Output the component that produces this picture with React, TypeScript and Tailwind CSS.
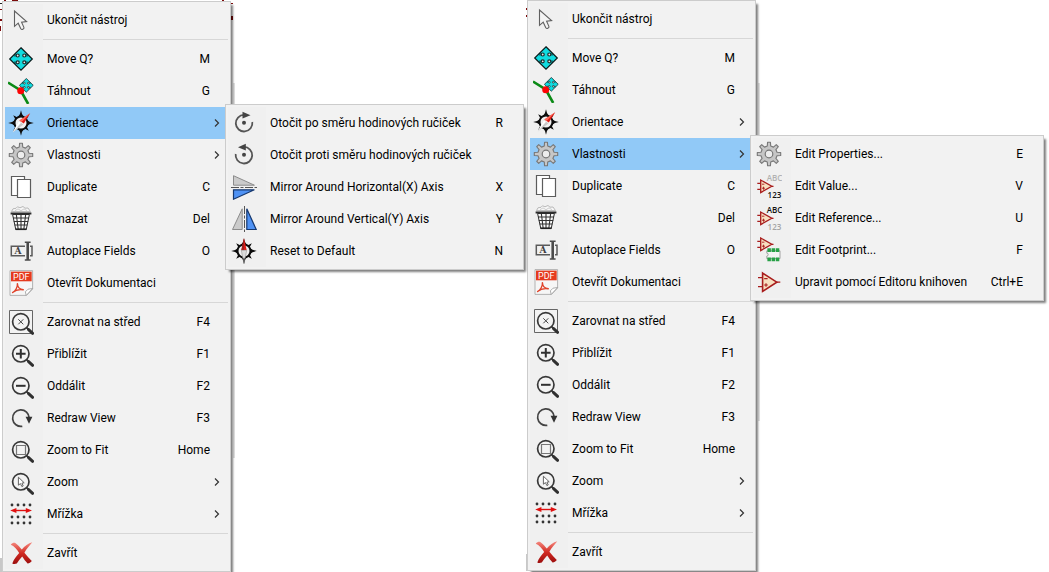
import type { ReactNode } from "react";

type IconName =
  | "cursor" | "move" | "drag" | "compass" | "compassNorth" | "gear" | "duplicate" | "trash"
  | "autoplace" | "pdf" | "center" | "zoomIn" | "zoomOut" | "redraw" | "fit" | "zoom" | "grid"
  | "close" | "cw" | "ccw" | "mirrorX" | "mirrorY" | "value" | "reference" | "footprint" | "library";

interface Entry {
  icon: IconName;
  label: string;
  keys?: string;
  submenu?: boolean;
}

const groups: Entry[][] = [
  [{ icon: "cursor", label: "Ukončit nástroj" }],
  [
    { icon: "move", label: "Move Q?", keys: "M" },
    { icon: "drag", label: "Táhnout", keys: "G" },
    { icon: "compass", label: "Orientace", submenu: true },
    { icon: "gear", label: "Vlastnosti", submenu: true },
    { icon: "duplicate", label: "Duplicate", keys: "C" },
    { icon: "trash", label: "Smazat", keys: "Del" },
    { icon: "autoplace", label: "Autoplace Fields", keys: "O" },
    { icon: "pdf", label: "Otevřít Dokumentaci" },
  ],
  [
    { icon: "center", label: "Zarovnat na střed", keys: "F4" },
    { icon: "zoomIn", label: "Přiblížit", keys: "F1" },
    { icon: "zoomOut", label: "Oddálit", keys: "F2" },
    { icon: "redraw", label: "Redraw View", keys: "F3" },
    { icon: "fit", label: "Zoom to Fit", keys: "Home" },
    { icon: "zoom", label: "Zoom", submenu: true },
    { icon: "grid", label: "Mřížka", submenu: true },
  ],
  [{ icon: "close", label: "Zavřít" }],
];

const orientation: Entry[] = [
  { icon: "cw", label: "Otočit po směru hodinových ručiček", keys: "R" },
  { icon: "ccw", label: "Otočit proti směru hodinových ručiček" },
  { icon: "mirrorX", label: "Mirror Around Horizontal(X) Axis", keys: "X" },
  { icon: "mirrorY", label: "Mirror Around Vertical(Y) Axis", keys: "Y" },
  { icon: "compassNorth", label: "Reset to Default", keys: "N" },
];

const properties: Entry[] = [
  { icon: "gear", label: "Edit Properties...", keys: "E" },
  { icon: "value", label: "Edit Value...", keys: "V" },
  { icon: "reference", label: "Edit Reference...", keys: "U" },
  { icon: "footprint", label: "Edit Footprint...", keys: "F" },
  { icon: "library", label: "Upravit pomocí Editoru knihoven", keys: "Ctrl+E" },
];

const gearPath = (() => {
  const points: string[] = [];
  for (let tooth = 0; tooth < 8; tooth++) {
    const base = tooth * 45 - 90;
    for (const [offset, radius] of [[-12, 8.2], [-7, 11.8], [7, 11.8], [12, 8.2]]) {
      const angle = ((base + offset) * Math.PI) / 180;
      points.push(`${(13 + radius * Math.cos(angle)).toFixed(2)} ${(13 + radius * Math.sin(angle)).toFixed(2)}`);
    }
  }
  return `M${points.join("L")}Z`;
})();

function MoveShape() {
  return (
    <g>
      <path d="M13 1.8 24.3 13 13 24.2 1.7 13Z" fill="#10dce0" stroke="#0b1a1a" strokeWidth="1.2" />
      {[[9.7, 9.5], [16.3, 9.5], [9.7, 16.3], [16.3, 16.3]].map(([x, y]) => (
        <circle key={`${x}-${y}`} cx={x} cy={y} r="1.5" fill="#e4ecec" stroke="#1c2c2c" strokeWidth="1.2" />
      ))}
      <path d="M7 8.1V10.6M19 8.1V10.6M7 15.4V17.9M19 15.4V17.9" stroke="#0b1a1a" strokeWidth="1" />
    </g>
  );
}

function Rose() {
  return (
    <g>
      <path d="M13 .2Q13.6 4.6 16 7H10Q12.4 4.6 13 .2ZM13 25.8Q13.6 21.4 16 19H10Q12.4 21.4 13 25.8ZM.2 13Q4.6 12.4 7 10V16Q4.6 13.6 .2 13ZM25.8 13Q21.4 12.4 19 10V16Q21.4 13.6 25.8 13Z" fill="#0c0c0c" />
      <path d="M5.2 5.2 9.6 7.4 7.4 9.6ZM20.8 5.2 18.6 9.6 16.4 7.4ZM5.2 20.8 7.4 16.4 9.6 18.6ZM20.8 20.8 16.4 18.6 18.6 16.4Z" fill="#0c0c0c" />
      <circle cx="13" cy="13" r="6.5" fill="#f0f0f0" stroke="#0c0c0c" strokeWidth="2" />
    </g>
  );
}

function Amp({ x = 0, y = 0 }: { x?: number; y?: number }) {
  return (
    <g transform={`translate(${x} ${y})`}>
      <path d="M1.3 10.3H4.7M1.3 16.3H4.7M16 13.3H17.5" stroke="#a81c1c" strokeWidth="1.3" />
      <path d="M4.7 7V19.6L15.8 13.3Z" fill="#f7dfc0" stroke="#a81c1c" strokeWidth="1.3" />
      <path d="M6 11.2H8.4M6 15.2H9M7.5 13.7V16.7" stroke="#a81c1c" strokeWidth=".9" />
    </g>
  );
}

function Lens({ children }: { children?: ReactNode }) {
  return (
    <g>
      <circle cx="12.8" cy="12.8" r="8.2" fill="#f3f3f3" stroke="#383838" strokeWidth="1.7" />
      <path d="M18.6 18.6 20.6 20.6" stroke="#383838" strokeWidth="1.8" />
      <path d="M20.6 20.6 24.6 24.3" stroke="#303030" strokeWidth="3" strokeLinecap="round" />
      {children}
    </g>
  );
}

const labelFont = "font-['Open_Sans',sans-serif] text-[8px] font-semibold";

const icons: Record<IconName, ReactNode> = {
  cursor: <path d="M6.5 4V19.3L10.2 16.2 12.8 21.8Q13.6 22.9 14.8 22.3 16.3 21.6 15.9 20.4L13.6 15.2 18.6 14.6Z" fill="#f4f4f4" stroke="#606060" strokeWidth="1.1" />,
  move: <MoveShape />,
  drag: (
    <g>
      <path d="M0 4.5 12.7 12.5 20.2 26" fill="none" stroke="#0b8a16" strokeWidth="2.6" />
      <g transform="translate(10.4 -.6) scale(.61)"><MoveShape /></g>
      <circle cx="12.7" cy="12.7" r="3.5" fill="#fb0505" />
    </g>
  ),
  compass: (
    <g>
      <Rose />
      <path d="M22.2 3.2 15.8 13.6 11.4 10.4Z" fill="#dc1b14" />
      <path d="M22.2 3.2 13.6 12 11.4 10.4Z" fill="#ff6a5a" />
      <path d="M4.8 22.6 10.8 11 15.4 14.6Z" fill="#c9c9c9" />
      <path d="M4.8 22.6 10.8 11 13 12.8Z" fill="#fff" />
    </g>
  ),
  compassNorth: (
    <g>
      <Rose />
      <path d="M13 .2 15.7 12.3H10.3Z" fill="#e01a14" />
      <path d="M13 .2V12.3H10.3Z" fill="#9e1f1f" />
      <path d="M10.3 12.3H15.7L13 25.8Z" fill="#dcdcdc" stroke="#888" strokeWidth=".5" />
      <path d="M13 19.5 13.8 21 13 25.8 12.2 21Z" fill="#333" />
    </g>
  ),
  gear: (
    <g>
      <path d={gearPath} fill="#c6c6c6" stroke="#777" strokeWidth="1.1" strokeLinejoin="round" />
      <circle cx="13" cy="13" r="3.8" fill="#ededed" stroke="#777" strokeWidth="1.2" />
    </g>
  ),
  duplicate: (
    <g fill="#fff" stroke="#5c5c5c" strokeWidth="1.2">
      <path d="M3.5 2.5H16.5V21.5H3.5Z" />
      <path d="M9.5 5.5H22.5V23.5H9.5Z" />
    </g>
  ),
  trash: (
    <g>
      <path d="M3.5 5.6 5 2.8 8 2.3 9.5 .8 12 1.8 15 .5 17 2.2 20 2 22.5 5.6Z" fill="#f7f7f7" stroke="#aaa" strokeWidth=".8" />
      <path d="M7 4.7 10 2.9 13 4.7 16 2.9 19 4.7" fill="none" stroke="#bbb" strokeWidth=".7" />
      <path d="M4.6 8.5 7.8 23.6H18.2L21.4 8.5Z" fill="#fafafa" stroke="#2d2d2d" strokeWidth="1" />
      <path d="M8.4 9 10.2 23.5M13 9V23.5M17.6 9 15.8 23.5M5 12H21M5.8 15.5H20.2M6.6 19H19.4" stroke="#333" strokeWidth="1.1" />
      <path d="M7.5 23.2H18.5" stroke="#222" strokeWidth="1.6" />
      <path d="M2.6 7.5H23.4" stroke="#2d2d2d" strokeWidth="2" />
    </g>
  ),
  autoplace: (
    <g>
      <path d="M17 8.3H3.3V17.7H17M22 8.3H24V17.7H22" fill="none" stroke="#5a5a5a" strokeWidth="1.5" />
      <path d="M16.8 4.3H22.6M16.8 22H22.6" stroke="#4a4a4a" strokeWidth="1.5" />
      <path d="M19.7 4.3V22" stroke="#4a4a4a" strokeWidth="2.6" />
      <text x="9.9" y="16.2" textAnchor="middle" fill="#3f3f3f" className="font-['DejaVu_Serif',serif] text-[9px] font-bold">A</text>
    </g>
  ),
  pdf: (
    <g>
      <path d="M2 .6H24.6V19L18.5 25.4H2Z" fill="#f6f6f6" stroke="#aaa" strokeWidth=".9" />
      <path d="M24.6 18.5 18.2 25.4 17.4 21.8 20 19.2Z" fill="#fff" stroke="#999" strokeWidth=".8" />
      <path d="M3 1.6H23.7V11.3H3Z" fill="#e53a1e" />
      <text x="13.3" y="9.7" textAnchor="middle" fill="#fff" className="font-['Roboto',sans-serif] text-[9px]">PDF</text>
      <path d="M4.6 22.6C7.5 21 9.8 17 9.4 13.6 9.5 17.5 12 19.6 15.3 19.8 11.5 19.2 7.5 20 4.6 22.6Z" fill="none" stroke="#e0432a" strokeWidth="1.4" strokeLinejoin="round" />
    </g>
  ),
  center: (
    <g>
      <path d="M1.5 1.5H24.5V24.5H1.5Z" fill="#f3f3f3" stroke="#666" />
      <Lens><path d="M10.3 10.3 15.3 15.3M15.3 10.3 10.3 15.3" stroke="#444" strokeWidth="1" /></Lens>
    </g>
  ),
  zoomIn: <Lens><path d="M12.8 8V17.6M8 12.8H17.6" stroke="#303030" strokeWidth="2" /></Lens>,
  zoomOut: <Lens><path d="M8 12.8H17.6" stroke="#303030" strokeWidth="2" /></Lens>,
  fit: <Lens><path d="M8.5 8.5H17.5V17.5H8.5Z" fill="none" stroke="#777" strokeWidth="1.2" /></Lens>,
  zoom: <Lens><path d="M10.4 8.2V16.2L12.4 14.6 13.9 17.6 15.2 16.9 13.9 14.1 16.2 13.8Z" fill="#fff" stroke="#555" strokeWidth=".9" /></Lens>,
  redraw: (
    <g>
      <path d="M14.3 21.3A8.3 8.3 0 1 1 21.2 13" fill="none" stroke="#444" strokeWidth="1.7" />
      <path d="M17.6 11.8H24.4L21 18.8Z" fill="#333" />
    </g>
  ),
  grid: (
    <g>
      {[4, 16, 22].flatMap((y) => [4, 10, 16, 22].map((x) => <circle key={`${x}-${y}`} cx={x} cy={y} r="1.4" fill="#333" />))}
      <path d="M6 9.5H20" stroke="#e01010" strokeWidth="1.4" />
      <path d="M2.2 9.5 8.4 7V12ZM24 9.5 17.8 7V12Z" fill="#e01010" />
    </g>
  ),
  close: (
    <g>
      <defs>
        <linearGradient id="close-fill" x1="0" y1="0" x2="0" y2="1">
          <stop offset="0" stopColor="#f58a80" />
          <stop offset=".5" stopColor="#d22a22" />
          <stop offset="1" stopColor="#9b0d0d" />
        </linearGradient>
      </defs>
      <path d="M2.8 4.8C4.3 2.9 6 2.4 7.6 3.2 10.2 5 12 7.4 13.8 9.6 16.6 6 20.3 3.2 24.3 2.3 21.6 5.4 18.6 8.8 16.4 12.8 18.7 15.9 21.2 18.6 23.8 21 22.6 22.7 21 23.6 19.6 23.5 17.6 21.6 15.8 19 14.2 16.6 12 18.8 10.2 21.2 8.8 23.6 7.2 24 5.6 24.2 4.3 23.4 5.8 19.6 8.2 16.2 11.2 13 8.8 9.4 6.2 6.2 2.8 4.8Z" fill="url(#close-fill)" />
    </g>
  ),
  cw: (
    <g>
      <path d="M21.3 12A8.3 8.3 0 1 1 13 4.9" fill="none" stroke="#555" strokeWidth="1.8" />
      <path d="M11.5 1.8 19.5 5.2 11.5 8.4Z" fill="#444" />
      <circle cx="13" cy="12.8" r="2" fill="#444" />
    </g>
  ),
  ccw: (
    <g>
      <path d="M4.7 12A8.3 8.3 0 1 0 13 4.9" fill="none" stroke="#555" strokeWidth="1.8" />
      <path d="M14.8 1.8 7 5.2 14.8 8.4Z" fill="#444" />
      <circle cx="13" cy="12.8" r="2" fill="#444" />
    </g>
  ),
  mirrorX: (
    <g>
      <path d="M2.5 1.7V11.2H23.4Z" fill="#cbcbcb" stroke="#8c8c8c" />
      <path d="M2.5 25.2V15.8H23.4Z" fill="#4f92f4" stroke="#16386f" strokeWidth="1.2" />
      <path d="M0 13.5H26" stroke="#555" strokeDasharray="8 1.5 3 1.5" />
    </g>
  ),
  mirrorY: (
    <g>
      <path d="M1.5 23.5H11.2V2.8Z" fill="#cbcbcb" stroke="#8c8c8c" />
      <path d="M25.2 23.5H15.8V2.8Z" fill="#4f92f4" stroke="#16386f" strokeWidth="1.2" />
      <path d="M13.5 0V26" stroke="#555" strokeDasharray="8 1.5 3 1.5" />
    </g>
  ),
  value: (
    <g>
      <Amp />
      <text x="10.8" y="7.8" fill="#b2b2b2" className={labelFont}>ABC</text>
      <text x="11.6" y="25" fill="#111" className={labelFont}>123</text>
    </g>
  ),
  reference: (
    <g>
      <Amp />
      <text x="10.8" y="7.8" fill="#111" className={labelFont}>ABC</text>
      <text x="11.6" y="25" fill="#a4a4a4" className={labelFont}>123</text>
    </g>
  ),
  footprint: (
    <g>
      <Amp y={-6} />
      <path d="M10.8 13.8H24V21.6H10.8V19A1.4 1.4 0 0 0 10.8 16.2Z" fill="#f4f4f4" stroke="#999" strokeWidth=".9" />
      {[11.4, 15.6, 19.8].map((x) => (
        <path key={x} d={`M${x} 11.3h3.5v3.7h-3.5zM${x} 20.5h3.5v3.7h-3.5z`} fill="#27a046" />
      ))}
    </g>
  ),
  library: (
    <g stroke="#a81c1c">
      <path d="M2 8.7H6.5M2 17.7H6.5M20.5 13.2H24.3" strokeWidth="1.3" />
      <path d="M6.6 4V22.4L20.8 13.2Z" fill="#f7dfc0" strokeWidth="1.6" />
      <path d="M8.2 9.6H11.6M8.2 16H11.8M10 14.2V17.8" strokeWidth="1.1" />
    </g>
  ),
};

function MenuItem({ entry, open, children }: { entry: Entry; open?: boolean; children?: ReactNode }) {
  return (
    <li role="none" className="relative">
      <button
        type="button"
        role="menuitem"
        aria-haspopup={entry.submenu ? "menu" : undefined}
        aria-expanded={entry.submenu ? Boolean(open) : undefined}
        className={`flex h-8 w-full items-center text-left ${open ? "bg-[#91c9f7]" : ""}`}
      >
        <span className={`flex h-8 w-[38px] shrink-0 items-center pl-[3px] ${open ? "" : "bg-[#f0f0f0]"}`}>
          <svg viewBox="0 0 26 26" className="size-[26px]" aria-hidden="true">{icons[entry.icon]}</svg>
        </span>
        <span className="flex-1 whitespace-nowrap pl-1">{entry.label}</span>
        {entry.keys && <kbd className="pr-[18px] font-[inherit]">{entry.keys}</kbd>}
        {entry.submenu && (
          <svg viewBox="0 0 6 10" className="mr-2 h-[10px] w-[6px]" aria-hidden="true">
            <path d="M1 1.5 4.5 5 1 8.5" fill="none" stroke="#333" strokeWidth="1.2" />
          </svg>
        )}
      </button>
      {children}
    </li>
  );
}

const panel = "border border-[#ccc] bg-[#f2f2f2] p-[2px] shadow-[3px_3px_2px_-1px_rgba(0,0,0,0.5)]";

function Submenu({ label, entries, width }: { label: string; entries: Entry[]; width: string }) {
  return (
    <ul role="menu" aria-label={label} className={`absolute -top-[3px] left-full z-10 -ml-[3px] ${panel} ${width}`}>
      {entries.map((entry) => <MenuItem key={entry.label} entry={entry} />)}
    </ul>
  );
}

function ContextMenu({ opened, children }: { opened: string; children: ReactNode }) {
  return (
    <ul role="menu" aria-label="Symbol" className={`relative w-[229px] ${panel}`}>
      {groups.map((group, index) => (
        <li key={group[0].label} role="none">
          {index > 0 && (
            <div role="separator" className="flex h-[7px] items-center">
              <span className="h-full w-[38px] bg-[#f0f0f0]" />
              <span className="h-px flex-1 bg-[#d7d7d7]" />
            </div>
          )}
          <ul role="group">
            {group.map((entry) => (
              <MenuItem key={entry.label} entry={entry} open={entry.label === opened}>
                {entry.label === opened && children}
              </MenuItem>
            ))}
          </ul>
        </li>
      ))}
    </ul>
  );
}

export default function App() {
  return (
    <main className="grid grid-cols-2 items-start gap-x-[3px] bg-white pl-[2px] font-['Roboto',sans-serif] text-xs text-black">
      <section className="relative pt-px">
        <svg className="absolute -left-[2px] top-0 h-[572px] w-[240px]" viewBox="0 0 240 572" aria-hidden="true">
          <path d="M4 0H6V1H4ZM12 0H18V1H12ZM222 0H224V1H222ZM0 9H2V10H0ZM0 19H2V21H0ZM0 26H1V31H0ZM231 3H233V4H231ZM231 16H233V20H231Z" fill="#7c0a0a" />
          <path d="M0 3H2V4H0Z" fill="#222" />
          <path d="M233 83H235V458H233Z" fill="#e2e2e2" />
          <path d="M0 558H2V572H0Z" fill="#c8c8c8" />
        </svg>
        <ContextMenu opened="Orientace">
          <Submenu label="Orientace" entries={orientation} width="w-[299px]" />
        </ContextMenu>
      </section>
      <section className="relative">
        <svg className="absolute -left-[2px] top-0 h-[571px] w-[240px]" viewBox="0 0 240 571" aria-hidden="true">
          <path d="M1 8H2V10H1ZM1 15H2V17H1Z" fill="#7c0a0a" />
          <path d="M233 83H235V421H233Z" fill="#e2e2e2" />
          <path d="M1 554H2V571H1Z" fill="#c8c8c8" />
        </svg>
        <ContextMenu opened="Vlastnosti">
          <Submenu label="Vlastnosti" entries={properties} width="w-[294px]" />
        </ContextMenu>
      </section>
    </main>
  );
}
